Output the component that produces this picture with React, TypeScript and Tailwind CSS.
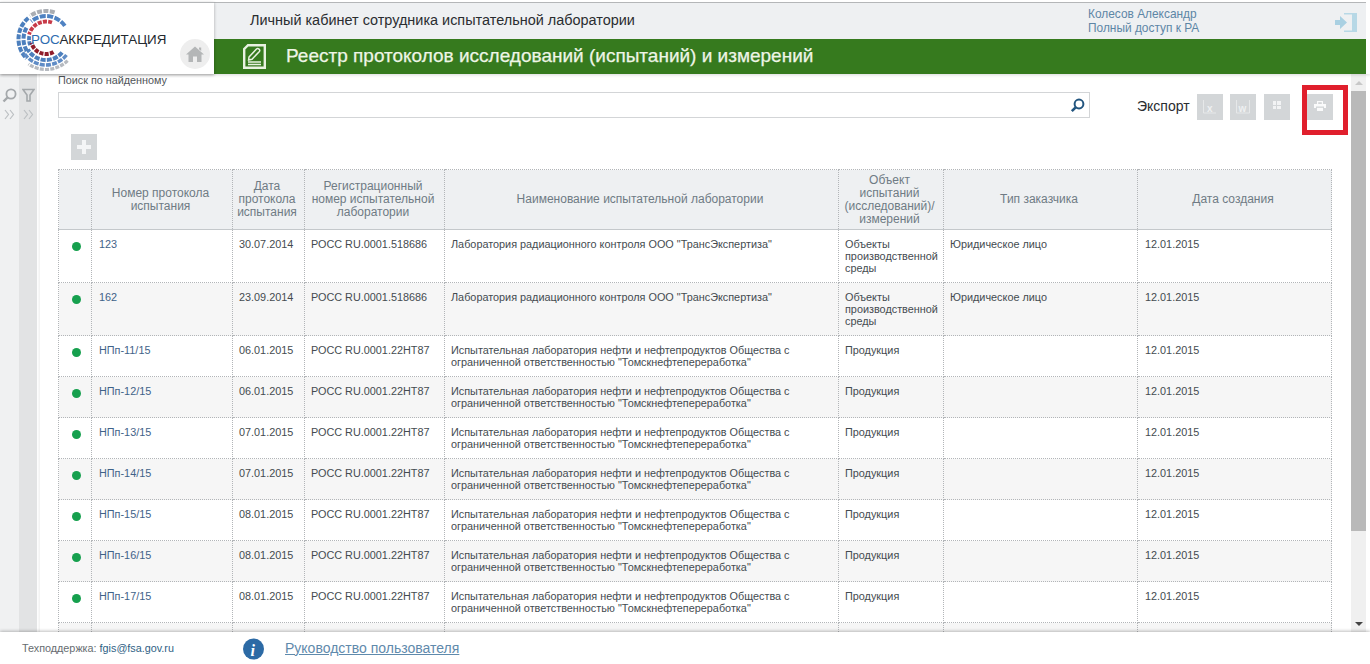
import React from "react";

function arc(cx: number, cy: number, r: number, a0: number, a1: number) {
  const p = (a: number) => [cx + r * Math.cos((a * Math.PI) / 180), cy + r * Math.sin((a * Math.PI) / 180)];
  const [x0, y0] = p(a0);
  const [x1, y1] = p(a1);
  const large = Math.abs(a1 - a0) > 180 ? 1 : 0;
  const sweep = a1 > a0 ? 1 : 0;
  return `M${x0.toFixed(2)} ${y0.toFixed(2)}A${r} ${r} 0 ${large} ${sweep} ${x1.toFixed(2)} ${y1.toFixed(2)}`;
}

function LogoRings() {
  const cx = 46;
  const cy = 39;
  return (
    <svg width="70" height="70" viewBox="10 4 70 70" className="absolute left-[10px] top-[1px]">
      {/* outer grey, top */}
      <path d={arc(cx, cy, 28, -72, -125)} fill="none" stroke="#a9adb3" strokeWidth="4" strokeDasharray="5 1.4" />
      {/* outer blue, left */}
      <path d={arc(cx, cy, 27.5, -130, -225)} fill="none" stroke="#4c7fbd" strokeWidth="4" strokeDasharray="5 1.4" />
      {/* second ring blue, top */}
      <path d={arc(cx, cy, 23, -35, -130)} fill="none" stroke="#4f82c2" strokeWidth="4" strokeDasharray="6 1.4" />
      <path d={arc(cx, cy, 22.5, -150, -215)} fill="none" stroke="#4c7fbd" strokeWidth="4" strokeDasharray="5 1.4" />
      {/* inner red, top */}
      <path d={arc(cx, cy, 17.5, -70, -165)} fill="none" stroke="#c73a48" strokeWidth="3.8" strokeDasharray="4 1.2" />
      {/* inner blue, left */}
      <path d={arc(cx, cy, 17, -170, -205)} fill="none" stroke="#4c7fbd" strokeWidth="3.8" strokeDasharray="4 1.2" />
      {/* bottom rings */}
      <path d={arc(cx, cy, 15, 60, 165)} fill="none" stroke="#8f1d2b" strokeWidth="4" strokeDasharray="4 1.2" />
      <path d={arc(cx, cy, 21, 40, 150)} fill="none" stroke="#4c7fbd" strokeWidth="4" strokeDasharray="5 1.2" />
      <path d={arc(cx, cy, 26, 38, 150)} fill="none" stroke="#5f8cc6" strokeWidth="3.4" strokeDasharray="5 1.2" />
      <path d={arc(cx, cy, 30.5, 45, 125)} fill="none" stroke="#b6bac0" strokeWidth="3.2" strokeDasharray="4 1.2" />
    </svg>
  );
}

const tomsk = (
  <>
    Испытательная лаборатория нефти и нефтепродуктов Общества с
    <br />
    ограниченной ответственностью "Томскнефтепереработка"
  </>
);
const rad = 'Лаборатория радиационного контроля ООО "ТрансЭкспертиза"';
const obj = (
  <>
    Объекты
    <br />
    производственной
    <br />
    среды
  </>
);

const rows: { n: string; d: string; r: string; tall: boolean }[] = [
  { n: "123", d: "30.07.2014", r: "РОСС RU.0001.518686", tall: true },
  { n: "162", d: "23.09.2014", r: "РОСС RU.0001.518686", tall: true },
  { n: "НПп-11/15", d: "06.01.2015", r: "РОСС RU.0001.22НТ87", tall: false },
  { n: "НПп-12/15", d: "06.01.2015", r: "РОСС RU.0001.22НТ87", tall: false },
  { n: "НПп-13/15", d: "07.01.2015", r: "РОСС RU.0001.22НТ87", tall: false },
  { n: "НПп-14/15", d: "07.01.2015", r: "РОСС RU.0001.22НТ87", tall: false },
  { n: "НПп-15/15", d: "08.01.2015", r: "РОСС RU.0001.22НТ87", tall: false },
  { n: "НПп-16/15", d: "08.01.2015", r: "РОСС RU.0001.22НТ87", tall: false },
  { n: "НПп-17/15", d: "08.01.2015", r: "РОСС RU.0001.22НТ87", tall: false },
];

const th = "border border-dotted border-[#b2b5b8] font-normal text-[12px] leading-[13px] text-[#6f7b84] text-center align-middle pl-0 pr-[3px]";
const cell = "border border-dotted border-[#b2b5b8] align-top pt-[8px] text-[10.85px] leading-[12px]";
const td = `${cell} px-[6px] text-[#444b50]`;

function ExportBtn({ children }: { children: React.ReactNode }) {
  return <div className="w-[26px] h-[26px] bg-[#d3d6d8] flex items-center justify-center">{children}</div>;
}

function Chevrons() {
  return (
    <svg width="11" height="11" viewBox="0 0 11 11" className="mt-[6px]">
      <path d="M1 1 L4.5 5.5 L1 10 M6 1 L9.5 5.5 L6 10" fill="none" stroke="#bcc0c3" strokeWidth="1.2" />
    </svg>
  );
}

export default function App() {
  return (
    <div className="relative w-[1370px] h-[664px] overflow-hidden bg-white flex flex-col font-['Liberation_Sans',Arial,sans-serif]">
      {/* Header */}
      <header className="flex h-[74px] pt-[2px] pr-[4px] shrink-0 relative z-10 shadow-[0_1px_3px_rgba(0,0,0,0.15)]">
        <div className="relative w-[214px] shrink-0 border-t border-[#b4b6b8] bg-white shadow-[0_1px_3px_rgba(0,0,0,0.3)]">
          <LogoRings />
          <span className="absolute left-[31px] top-[29px] text-[13.4px] leading-[16px] text-[#23292f] whitespace-nowrap">
            <span className="text-[#2d6cb0]">РОС</span>АККРЕДИТАЦИЯ
          </span>
          <div className="absolute left-[180px] top-[36px] w-[30px] h-[30px] rounded-full bg-[#eeeeee] flex items-center justify-center">
            <svg width="18" height="16" viewBox="0 0 18 16">
              <path d="M9 0.5 L18 8.5 H15.5 V16 H11 V10.5 H7 V16 H2.5 V8.5 H0 Z M13 1.5 h2.2 v3.6 L13 3.2 Z" fill="#b4b6b7" />
            </svg>
          </div>
        </div>
        <div className="flex-1 flex flex-col border-t border-[#b4b6b8]">
          <div className="h-[36px] bg-[#eef0f2] flex items-center pl-[36px] pr-[9px] shrink-0">
            <span className="text-[14.45px] text-[#2a2d30] flex-1 whitespace-nowrap">Личный кабинет сотрудника испытательной лаборатории</span>
            <div className="text-[11.9px] leading-[14px] text-[#5d86a6] w-[247px] pb-[1px]">
              Колесов Александр
              <br />
              Полный доступ к РА
            </div>
            <svg width="22" height="21" viewBox="0 0 22 21" className="mt-[2px]">
              <path d="M0 8 H5 V4 L12 10.5 L5 17 V13 H0 Z" fill="#a9d0e2" />
              <path d="M9 1 H22 V20 H9 V18.4 H17 V2.6 H9 Z" fill="#b7d8e6" />
            </svg>
          </div>
          <div className="flex-1 bg-[#367a1e] flex items-center pl-[29px]">
            <svg width="23" height="25" viewBox="0 0 23 25" className="shrink-0">
              <path d="M5 1.2 H21.8 V23.8 H1.2 V5 Z" fill="none" stroke="#e9f2e1" strokeWidth="2.4" />
              <path d="M6 13 L13.5 5 C15 3.6 17.8 5.8 16.4 7.4 L9 15.2 L5.6 16 Z" fill="none" stroke="#e9f2e1" strokeWidth="1.5" />
              <path d="M5 18 H18 M5 20.5 H18" stroke="#e9f2e1" strokeWidth="1.5" />
            </svg>
            <h1 className="ml-[20px] text-[19px] font-normal text-[#eef5e6] [-webkit-text-stroke:0.25px_#eef5e6] whitespace-nowrap">
              Реестр протоколов исследований (испытаний) и измерений
            </h1>
          </div>
        </div>
      </header>

      {/* Middle */}
      <div className="flex flex-1 min-h-0 pr-[4px]">
        <aside className="flex shrink-0 w-[40px] shadow-[inset_-3px_0_3px_-2px_rgba(0,0,0,0.08)]">
          <div className="w-[19px] bg-[#f0f1f2] flex flex-col items-center pt-[14px]">
            <svg width="15" height="15" viewBox="0 0 15 15">
              <circle cx="9" cy="6" r="4.6" fill="none" stroke="#a4a8ab" strokeWidth="1.8" />
              <path d="M5.5 9.5 L1.5 13.5" stroke="#a4a8ab" strokeWidth="2.4" />
            </svg>
            <Chevrons />
          </div>
          <div className="w-[18px] bg-[#e2e3e4] flex flex-col items-center pt-[14px]">
            <svg width="13" height="15" viewBox="0 0 13 15">
              <path d="M1 1.5 H12 L8 7 V13 H5 V7 Z" fill="none" stroke="#a4a8ab" strokeWidth="1.6" />
            </svg>
            <Chevrons />
          </div>
        </aside>

        <main className="flex-1 min-w-0 overflow-hidden pl-[18px] pr-[17px] flex flex-col">
          <label className="text-[10.8px] leading-[12px] text-[#4f5559] whitespace-nowrap">Поиск по найденному</label>
          <div className="flex items-start mt-[6px]">
            <div className="relative w-[1032px] h-[26px] shrink-0 border border-[#d3d5d7] bg-white">
              <svg width="15" height="15" viewBox="0 0 15 15" className="absolute right-[4px] top-[5px]">
                <circle cx="9" cy="6" r="4.4" fill="none" stroke="#22557f" strokeWidth="2" />
                <path d="M5.7 9.3 L1.8 13.2" stroke="#22557f" strokeWidth="2.6" />
              </svg>
            </div>
            <span className="ml-[47px] mt-[6px] text-[14px] leading-[16px] text-[#2a2d30]">Экспорт</span>
            <div className="ml-[7px] mt-[2px] flex">
              <ExportBtn>
                <svg width="16" height="16" viewBox="0 0 16 16">
                  <path d="M1.5 1 V14 H14" fill="none" stroke="#e6e8e9" />
                  <text x="5" y="13" fontSize="10" fontWeight="700" fill="#eef0f1">x</text>
                </svg>
              </ExportBtn>
              <div className="w-[7px]" />
              <ExportBtn>
                <svg width="16" height="16" viewBox="0 0 16 16">
                  <path d="M1.5 1 V14 H14.5 V1" fill="none" stroke="#e6e8e9" />
                  <text x="3.5" y="12.5" fontSize="10" fontWeight="700" fill="#eef0f1">w</text>
                </svg>
              </ExportBtn>
              <div className="w-[8px]" />
              <ExportBtn>
                <div className="grid grid-cols-2 gap-[1px] mb-[4px]">
                  <span className="w-[3.5px] h-[3.5px] bg-[#f2f3f4]" />
                  <span className="w-[3.5px] h-[3.5px] bg-[#f2f3f4]" />
                  <span className="w-[3.5px] h-[3.5px] bg-[#f2f3f4]" />
                  <span className="w-[3.5px] h-[3.5px] bg-[#f2f3f4]" />
                </div>
              </ExportBtn>
              <div className="w-[17px]" />
              <ExportBtn>
                <svg width="12" height="10" viewBox="0 0 12 10" className="mb-[2px]">
                  <path d="M3 0 H9 V3 H12 V7 H10 V5.5 H2 V7 H0 V3 H3 Z" fill="#fafbfb" />
                  <path d="M4.2 1.2 H7.8 V3 H4.2 Z" fill="#d3d6d8" />
                  <rect x="3" y="6.8" width="6" height="3.2" fill="#fafbfb" />
                </svg>
              </ExportBtn>
            </div>
          </div>

          <div className="mt-[14px] ml-[13px] w-[26px] h-[26px] bg-[#d3d6d8] flex items-center justify-center shrink-0">
            <svg width="14" height="14" viewBox="0 0 14 14">
              <path d="M5 0 H9 V5 H14 V9 H9 V14 H5 V9 H0 V5 H5 Z" fill="#f4f5f6" />
            </svg>
          </div>

          <table className="mt-[9px] w-[1273px] table-fixed border-collapse shrink-0">
            <colgroup>
              <col className="w-[33px]" />
              <col className="w-[141px]" />
              <col className="w-[72px]" />
              <col className="w-[140px]" />
              <col className="w-[394px]" />
              <col className="w-[105px]" />
              <col className="w-[194px]" />
              <col className="w-[194px]" />
            </colgroup>
            <thead>
              <tr className="h-[60px] bg-[#eef0f2] border-b border-solid border-[#c4c8cb]">
                <th className={th} />
                <th className={th}>
                  Номер протокола
                  <br />
                  испытания
                </th>
                <th className={th}>
                  Дата
                  <br />
                  протокола
                  <br />
                  испытания
                </th>
                <th className={th}>
                  Регистрационный
                  <br />
                  номер испытательной
                  <br />
                  лаборатории
                </th>
                <th className={th}>Наименование испытательной лаборатории</th>
                <th className={th}>
                  Объект
                  <br />
                  испытаний
                  <br />
                  (исследований)/
                  <br />
                  измерений
                </th>
                <th className={th}>Тип заказчика</th>
                <th className={th}>Дата создания</th>
              </tr>
            </thead>
            <tbody>
              {rows.map((r, i) => (
                <tr key={r.n} className={`${r.tall ? "h-[53px]" : "h-[41px]"} ${i % 2 === 0 ? "bg-white" : "bg-[#f6f6f6]"}`}>
                  <td className={`${cell} pl-[9px] pr-[6px]`}>
                    <div className="mx-auto mt-[4px] w-[9px] h-[9px] rounded-full bg-[#16a04e]" />
                  </td>
                  <td className={`${cell} pl-[7px] pr-[6px] text-[#3f6288]`}>{r.n}</td>
                  <td className={td}>{r.d}</td>
                  <td className={td}>{r.r}</td>
                  <td className={td}>{r.tall ? rad : tomsk}</td>
                  <td className={td}>{r.tall ? obj : "Продукция"}</td>
                  <td className={td}>{r.tall ? "Юридическое лицо" : ""}</td>
                  <td className={`${cell} pl-[7px] pr-[6px] text-[#444b50]`}>12.01.2015</td>
                </tr>
              ))}
              <tr className="h-[41px] bg-[#f6f6f6]">
                <td className={td} />
                <td className={td} />
                <td className={td} />
                <td className={td} />
                <td className={td} />
                <td className={td} />
                <td className={td} />
                <td className={td} />
              </tr>
            </tbody>
          </table>
        </main>

        <div className="w-[15px] shrink-0 bg-[#f0f0f0] flex flex-col items-center">
          <div className="h-[17px] flex items-center justify-center shrink-0">
            <div className="w-0 h-0 border-x-[4px] border-x-transparent border-b-[4px] border-b-[#c8c8c8]" />
          </div>
          <div className="w-full h-[440px] bg-[#b9b9b9]" />
          <div className="flex-1" />
          <div className="h-[17px] flex items-center justify-center shrink-0">
            <div className="w-0 h-0 border-x-[4px] border-x-transparent border-t-[4px] border-t-[#444]" />
          </div>
        </div>
      </div>

      {/* Red annotation */}
      <div className="absolute left-[1302px] top-[85px] w-[46px] h-[50px] border-[5px] border-[#e01f2d] z-20" />

      {/* Footer */}
      <footer className="h-[32px] shrink-0 bg-white relative z-10 shadow-[0_-1px_3px_rgba(0,0,0,0.25)] flex items-center pl-[22px]">
        <span className="text-[10.8px] text-[#666c70] whitespace-nowrap w-[221px]">
          Техподдержка: <span className="text-[#2f5f85]">fgis@fsa.gov.ru</span>
        </span>
        <svg width="21" height="22" viewBox="0 0 21 22" className="shrink-0 mt-[2px]">
          <circle cx="10.5" cy="11" r="10.5" fill="#2c6aa5" />
          <text x="7.5" y="18" fontSize="16" fontWeight="700" fontStyle="italic" fill="#fff" fontFamily="Liberation Serif">i</text>
        </svg>
        <a className="ml-[21px] text-[14px] text-[#5f8aac] underline whitespace-nowrap">Руководство пользователя</a>
      </footer>
    </div>
  );
}
